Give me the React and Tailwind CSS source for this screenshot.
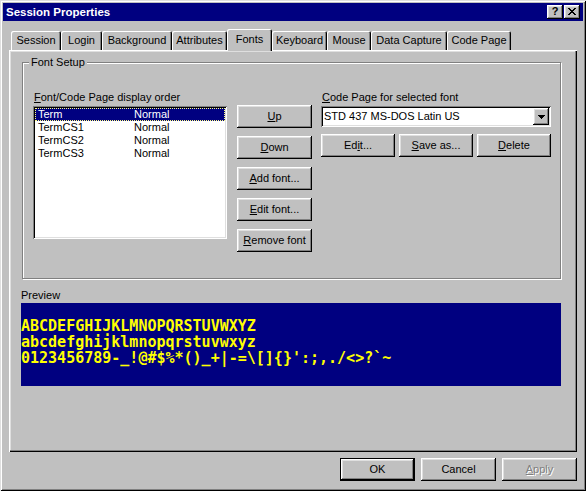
const raised = 'shadow-[inset_-1px_-1px_0_#000,inset_1px_1px_0_#fff,inset_-2px_-2px_0_#808080,inset_2px_2px_0_#dfdfdf]';
const sunken = 'shadow-[inset_1px_1px_0_#808080,inset_-1px_-1px_0_#fff,inset_2px_2px_0_#000,inset_-2px_-2px_0_#dfdfdf]';

const tabs = [
  { label: 'Session', w: 'w-[50px]' },
  { label: 'Login', w: 'w-[41px]' },
  { label: 'Background', w: 'w-[70px]' },
  { label: 'Attributes', w: 'w-[55px]' },
  { label: 'Fonts', w: 'w-[45px]', active: true },
  { label: 'Keyboard', w: 'w-[55px]' },
  { label: 'Mouse', w: 'w-[44px]' },
  { label: 'Data Capture', w: 'w-[76px]' },
  { label: 'Code Page', w: 'w-[64px]' },
];

const fonts = [
  ['Term', 'Normal'],
  ['TermCS1', 'Normal'],
  ['TermCS2', 'Normal'],
  ['TermCS3', 'Normal'],
];

function Btn({ children, w = 'w-[75px]', extra = '' }) {
  return (
    <button type="button" className={`flex items-center justify-center h-[23px] ${w} ${raised} ${extra}`}>
      {children}
    </button>
  );
}

function TitleBtn({ children }) {
  return (
    <div className={`w-[16px] h-[14px] bg-[#c0c0c0] flex items-center justify-center ${raised}`}>
      {children}
    </div>
  );
}

function CloseGlyph() {
  // 8x7 pixel X
  const px = [
    [0, 0], [1, 0], [6, 0], [7, 0],
    [1, 1], [2, 1], [5, 1], [6, 1],
    [2, 2], [3, 2], [4, 2], [5, 2],
    [3, 3], [4, 3],
    [2, 4], [3, 4], [4, 4], [5, 4],
    [1, 5], [2, 5], [5, 5], [6, 5],
    [0, 6], [1, 6], [6, 6], [7, 6],
  ];
  return (
    <svg width="8" height="7" viewBox="0 0 8 7" shapeRendering="crispEdges" className="mt-[-1px]">
      {px.map(([x, y]) => <rect key={`${x}-${y}`} x={x} y={y} width="1" height="1" fill="#000" />)}
    </svg>
  );
}

export default function App() {
  return (
    <div className="w-[586px] h-[491px] bg-[#c0c0c0] p-[3px] font-['Liberation_Sans',Arial,sans-serif] text-[11px] leading-[13px] text-black select-none shadow-[inset_1px_1px_0_#dfdfdf,inset_-1px_-1px_0_#000,inset_2px_2px_0_#fff,inset_-2px_-2px_0_#808080]">
      {/* Title bar */}
      <div className="h-[18px] bg-[#000080] flex items-center justify-between pl-[3px] pr-[3px]">
        <span className="text-white font-bold text-[11.5px]">Session Properties</span>
        <div className="flex gap-[1px]">
          <TitleBtn><span className="font-bold text-[11px] leading-[11px] mt-[-1px]">?</span></TitleBtn>
          <TitleBtn><CloseGlyph /></TitleBtn>
        </div>
      </div>

      <div className="px-[6px]">
        {/* Tabs */}
        <div className="mt-[8px] h-[21px] flex items-end pl-[2px]">
          {tabs.map(t => (
            <div
              key={t.label}
              className={
                t.active
                  ? `${t.w} h-[22px] -mb-[1px] relative z-10 bg-[#c0c0c0] flex items-center justify-center pb-[2px] rounded-t-[2px] shadow-[inset_1px_1px_0_#fff,inset_-1px_0_0_#000,inset_-2px_0_0_#808080]`
                  : `${t.w} h-[19px] flex items-center justify-center rounded-t-[2px] shadow-[inset_1px_1px_0_#fff,inset_-1px_0_0_#000,inset_-2px_0_0_#808080]`
              }
            >
              {t.label}
            </div>
          ))}
        </div>

        {/* Tab panel */}
        <div className="w-[568px] h-[402px] pt-[12px] shadow-[inset_1px_1px_0_#fff,inset_-1px_-1px_0_#000,inset_-2px_-2px_0_#808080,inset_2px_2px_0_#dfdfdf]">
          {/* Font Setup group */}
          <div className="ml-[13px] w-[539px] h-[217px] border border-[#808080] shadow-[inset_1px_1px_0_#fff,1px_1px_0_#fff]">
            <div className="-mt-[7px] ml-[6px] w-fit px-[2px] bg-[#c0c0c0]">Font Setup</div>

            <div className="mt-[22px] ml-[10px] flex items-start">
              {/* List */}
              <div className="w-[194px]">
                <div className="pl-[1px]"><u>F</u>ont/Code Page display order</div>
                <div className={`mt-[2px] h-[133px] bg-white p-[2px] ${sunken}`}>
                  {fonts.map(([name, style], i) => (
                    <div
                      key={name}
                      className={
                        i === 0
                          ? 'h-[13px] flex items-center pl-[3px] bg-[#000080] text-white outline-1 outline-dotted outline-[#ffff80] -outline-offset-1'
                          : 'h-[13px] flex items-center pl-[3px]'
                      }
                    >
                      <span className="w-[96px]">{name}</span>
                      <span>{style}</span>
                    </div>
                  ))}
                </div>
              </div>

              {/* Order buttons */}
              <div className="ml-[10px] pt-[14px] flex flex-col gap-[8px]">
                <Btn><u>U</u>p</Btn>
                <Btn><u>D</u>own</Btn>
                <Btn><u>A</u>dd font...</Btn>
                <Btn><u>E</u>dit font...</Btn>
                <Btn><u>R</u>emove font</Btn>
              </div>

              {/* Code page */}
              <div className="ml-[9px] w-[230px]">
                <div className="pl-[1px]"><u>C</u>ode Page for selected font</div>
                <div className={`mt-[2px] h-[21px] bg-white p-[2px] flex items-center ${sunken}`}>
                  <span className="flex-1 pl-[1px]">STD 437 MS-DOS Latin US</span>
                  <div className={`w-[16px] h-[17px] bg-[#c0c0c0] flex items-center justify-center ${raised}`}>
                    <svg width="7" height="4" viewBox="0 0 7 4" shapeRendering="crispEdges">
                      <rect x="0" y="0" width="7" height="1" fill="#000" />
                      <rect x="1" y="1" width="5" height="1" fill="#000" />
                      <rect x="2" y="2" width="3" height="1" fill="#000" />
                      <rect x="3" y="3" width="1" height="1" fill="#000" />
                    </svg>
                  </div>
                </div>
                <div className="mt-[7px] flex gap-[4px]">
                  <Btn w="w-[74px]">Ed<u>i</u>t...</Btn>
                  <Btn w="w-[74px]"><u>S</u>ave as...</Btn>
                  <Btn w="w-[74px]"><u>D</u>elete</Btn>
                </div>
              </div>
            </div>
          </div>

          {/* Preview */}
          <div className="mt-[10px] ml-[12px]">Preview</div>
          <div className="mt-[1px] ml-[12px] w-[540px] h-[83px] bg-[#000080] text-[#ffff00] font-['DejaVu_Sans_Mono',monospace] font-bold text-[15px] leading-[16px] pt-[15px] whitespace-pre">
            <div>ABCDEFGHIJKLMNOPQRSTUVWXYZ</div>
            <div>abcdefghijklmnopqrstuvwxyz</div>
            <div>{"0123456789-_!@#$%*()_+|-=\\[]{}':;,./<>?`~"}</div>
          </div>
        </div>

        {/* Dialog buttons */}
        <div className="mt-[6px] flex justify-end gap-[6px]">
          <Btn extra="border border-black">OK</Btn>
          <Btn>Cancel</Btn>
          <Btn><span className="text-[#808080] [text-shadow:1px_1px_0_#fff]"><u>A</u>pply</span></Btn>
        </div>
      </div>
    </div>
  );
}
